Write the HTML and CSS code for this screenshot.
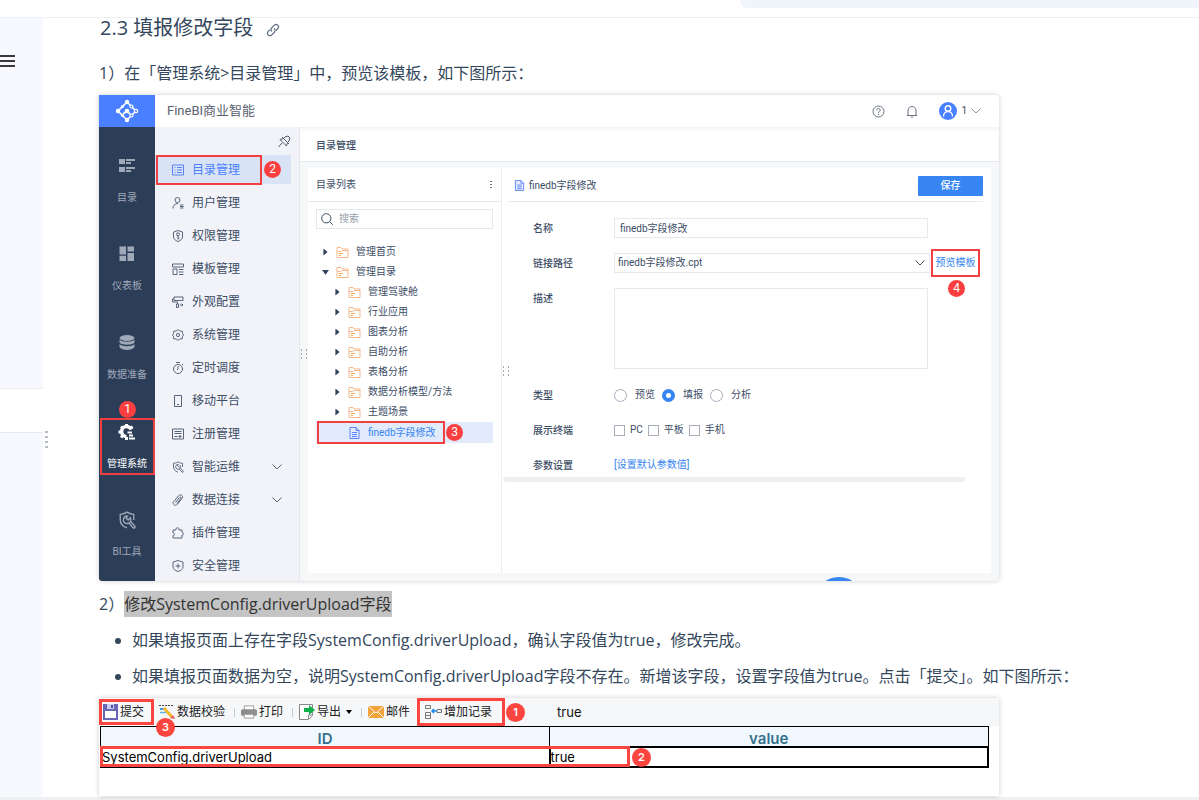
FILE: index.html
```html
<!DOCTYPE html>
<html lang="zh-CN">
<head>
<meta charset="utf-8">
<title>填报修改字段</title>
<link rel="stylesheet" href="styles.css">
</head>
<body>
<svg class="defs" aria-hidden="true">
  <symbol id="folder" viewBox="0 0 12 12"><g fill="none" stroke="#f8b88b"><path d="M.5 11.500V1.500h4l1.200 1.500h5.800v8.500zM.5 5.500h4l1-1h6"/><path stroke="#f6a94b" d="M2.500 7.500h4M2.500 9.500h2"/></g></symbol>
  <symbol id="doc" viewBox="0 0 12 12"><path fill="#e4ebff" stroke="#5b83f5" d="M1.500.5h6l3 3v8h-9zM7.500.5v3h3M3.500 5.500h5M3.500 7.500h5M3.500 9.500h5"/></symbol>
  <symbol id="down" viewBox="0 0 10 6"><path fill="none" stroke="currentColor" d="M.5.5 5 5 9.500.5"/></symbol>
  <symbol id="tool" viewBox="0 0 16 16"><g fill="none" stroke="currentColor" stroke-width="1.200"><path d="M14 8V3C11 3 9.500 2 8 1 6.500 2 5 3 2 3v5c0 3 2 5.500 6 7"/><path d="m9.500 10.500 4 4.500c1 .5 2-.5 1.500-1.500l-4-4.500"/><path d="M8.500 4.500a3.300 3.300 0 1 0 2.700 4.500c.5-1.300.3-2-.2-3L9 8 7.200 6.300z"/></g></symbol>
</svg>
<header class="topbar"><div class="topsearch"></div></header>
<div class="page">
  <aside class="side">
    <button class="burger" aria-label="菜单"><i></i><i></i><i></i></button>
    <div class="tab"></div>
  </aside>
  <main class="doc">
    <div class="grip"><i></i><i></i><i></i><i></i></div>
    <h2>2.3 填报修改字段
      <svg width="14" height="14" viewBox="0 0 14 14" fill="none" stroke="#5f6f83" stroke-width="1.200"><path d="M6 8.500C4.500 7.500 4.800 5.500 6 4.500l2.300-2.400c2.500-2 5.500 1 3.700 3.400L10 7.500M8 5.500c1.500 1 1.300 3 0 4.200L5.700 12C3.200 14 .2 11 2 8.600l2-2"/></svg>
    </h2>
    <p class="step">1）在「管理系统&gt;目录管理」中，预览该模板，如下图所示：</p>

    <section class="app">
      <div class="logo"><svg width="24" height="24" viewBox="0 0 24 24"><g fill="none" stroke="#fff" stroke-width="1.600"><path d="M12 3 3 12l9 9M12 3l4 4M8 15l4-3 4 4M12 21l4-4M17 8l4 4-4 4"/></g><g fill="#fff"><circle cx="12" cy="3" r="2.200"/><circle cx="3" cy="12" r="2.200"/><circle cx="12" cy="21" r="2.200"/><circle cx="12" cy="12" r="2.300"/><circle cx="7.500" cy="7.500" r="1.500"/><circle cx="7.500" cy="16.500" r="1.500"/></g><g fill="#4a80ff" stroke="#fff" stroke-width="1.200"><circle cx="16.500" cy="7.500" r="1.500"/><circle cx="21" cy="12" r="1.700"/><circle cx="16.500" cy="16.500" r="1.500"/></g></svg></div>
      <div class="apphead">
        <span class="brand">FineBI商业智能</span>
        <svg width="13" height="13" viewBox="0 0 13 13" fill="none" stroke="#68717f"><circle cx="6.500" cy="6.500" r="5.500"/><path d="M4.700 5.200c0-2.400 3.600-2.200 3.600 0 0 1.200-1.800 1.200-1.800 2.500M6.500 8.800v1.200"/></svg>
        <svg width="12" height="13" viewBox="0 0 12 13" fill="none" stroke="#68717f"><path d="M1 10.500h10M2 10.500V6c0-6 8-6 8 0v4.500M5 12.200h2"/></svg>
        <div class="user">
          <svg width="18" height="18" viewBox="0 0 18 18"><circle cx="9" cy="9" r="9" fill="#4a80ff"/><g fill="none" stroke="#fff" stroke-width="1.400"><circle cx="9" cy="6.500" r="2.800"/><path d="M4.500 14.500c0-6.500 9-6.500 9 0"/></g></svg>
          <span>1</span>
          <svg width="10" height="6" color="#8f96a1"><use href="#down"/></svg>
        </div>
      </div>

      <nav class="rail">
        <a href="#"><svg width="18" height="18" viewBox="0 0 18 18" fill="currentColor"><path d="M1 2h6v5H1zM1 10h6v5H1zM8 2h9v2H8zM8 5h5v2H8zM8 10h9v2H8zM8 13h5v2H8z"/></svg>目录</a>
        <a href="#"><svg width="18" height="18" viewBox="0 0 18 18" fill="currentColor"><path d="M1.500 1.500H8v8H1.500zM9.500 1.500H16v5H9.500zM1.500 10.800H8V16H1.500zM9.500 8H16v8H9.500z"/></svg>仪表板</a>
        <a href="#"><svg width="18" height="18" viewBox="0 0 18 18" fill="currentColor"><ellipse cx="9" cy="4" rx="7.500" ry="3"/><path d="M1.500 5.500c2 3 13 3 15 0v3c-2 3-13 3-15 0zM1.500 10c2 3 13 3 15 0v3c-2 4-13 4-15 0z"/></svg>数据准备</a>
        <a href="#" class="on"><svg width="18" height="18" viewBox="0 0 18 18"><path fill="none" stroke="#fff" stroke-width="3.500" d="M13.200 6.500A5 5 0 1 0 8.500 13.500"/><path stroke="#fff" stroke-width="3" d="M8.500 1v3M.5 9h3M3 3.500l2 2M14.500 3.500l-2 2M3 14.500l2-2M8.500 17v-3"/><path stroke="#fff" stroke-width="2" d="M9.500 9.500H14M11 12.500h4M11 15.500h6"/></svg>管理系统<b class="frame"></b><b class="badge b1">1</b></a>
        <a href="#"><svg width="18" height="18"><use href="#tool"/></svg>BI工具</a>
      </nav>

      <nav class="menu">
        <button class="pin" aria-label="固定"><svg width="13" height="13" viewBox="0 0 13 13" fill="none" stroke="#505b6c"><path d="M2 4.500 8.500 11l.8-3M2 4.500l3-.8M7 2l3-1 2 2-1 3M4 8l-3.500 4M4 2l7 7M6 3l1-1M10 7l1-1"/></svg></button>
        <a href="#" class="on"><svg viewBox="0 0 12 12"><path d="M.5 1h11v10H.5zM2.500 3.500h1M5 3.500h5M2.500 6h1M5 6h5M2.500 8.500h1M5 8.500h5"/></svg>目录管理<b class="frame"></b><b class="badge b2">2</b></a>
        <a href="#"><svg viewBox="0 0 12 12"><circle cx="5.500" cy="3" r="2.500"/><path d="M1 11.500c0-3 2-5 5-5M8 8h3.500M8 9.500h3.500M8 11h3.500"/></svg>用户管理</a>
        <a href="#"><svg viewBox="0 0 12 12"><path d="M1.500 2 6 .5 10.500 2v5c0 2-2 3.500-4.500 4.500C3.500 10.500 1.500 9 1.500 7z"/><circle cx="6" cy="4.300" r="1.500"/><path d="M6 6v3.500M6 8h1.500"/></svg>权限管理</a>
        <a href="#"><svg viewBox="0 0 12 12"><path d="M.5 1h11v3H.5zM1 6h4v5.500H1zM7 6.500h4.500M7 9h4.500M7 11.500h4.500"/></svg>模板管理</a>
        <a href="#"><svg viewBox="0 0 12 12"><path d="M2 1h9v3.500H2zM2 3H.5v3h5v2M4.500 8h2v3.500h-2zM9 7.500v3M10.500 8v2"/></svg>外观配置</a>
        <a href="#"><svg viewBox="0 0 12 12"><path d="M6 .5 7.500 2l2.800.2.200 2.300 1 1.500-1 1.500-.2 2.300-2.800.2L6 11.500 4.500 10l-2.800-.2-.2-2.300L.5 6l1-1.500.2-2.300L4.500 2z"/><circle cx="6" cy="6" r="1.600"/></svg>系统管理</a>
        <a href="#"><svg viewBox="0 0 12 12"><circle cx="6" cy="7" r="4.500"/><path d="M4 .5h4M6 4v3l-1 1M10 2l1 1"/></svg>定时调度</a>
        <a href="#"><svg viewBox="0 0 12 12"><path d="M2.500.5h7v11h-7zM5 9.500h2"/></svg>移动平台</a>
        <a href="#"><svg viewBox="0 0 12 12"><path d="M.5 1h11v10H.5zM2.500 3.500h7M2.500 5.500h7M2.500 8.500h3M8 7v3M6.500 8.500h3"/></svg>注册管理</a>
        <a href="#"><svg viewBox="0 0 16 16"><use href="#tool"/></svg>智能运维<svg class="more" viewBox="0 0 10 6"><use href="#down"/></svg></a>
        <a href="#"><svg viewBox="0 0 12 12"><path d="M2 7.500 6.500 1.800c2-2 5-.3 3.700 2.200L5.700 10c-2.500 3-6 0-4-2.500M3.500 8.500 7.500 3.500c1-1 2 0 1.200 1L5 9.500"/></svg>数据连接<svg class="more" viewBox="0 0 10 6"><use href="#down"/></svg></a>
        <a href="#"><svg viewBox="0 0 12 12"><path d="M1 3h3c-1-3 4-3 3 0h3v2.500c2-.5 2 3 0 2.500v3H1V8.500c2 .5 2-3 0-2.500z"/></svg>插件管理</a>
        <a href="#"><svg viewBox="0 0 12 12"><path d="M1 2 6 .5 11 2v5c0 2-2 3.500-5 4.500C3 10.500 1 9 1 7zM6 3.500v5M3.500 6h5"/></svg>安全管理</a>
      </nav>

      <div class="work">
        <h3>目录管理</h3>
        <div class="panes">
          <div class="dots d1"></div>
          <section class="tree">
            <header>目录列表<span class="kebab"></span></header>
            <label class="find"><svg width="12" height="12" viewBox="0 0 12 12" fill="none" stroke="#3d4d66"><circle cx="5.300" cy="5.300" r="4.600"/><path d="m8.700 8.700 3 3"/></svg><input type="text" placeholder="搜索" aria-label="搜索"></label>
            <ul>
              <li><svg><use href="#folder"/></svg>管理首页</li>
              <li class="open"><svg><use href="#folder"/></svg>管理目录</li>
              <li class="sub"><svg><use href="#folder"/></svg>管理驾驶舱</li>
              <li class="sub"><svg><use href="#folder"/></svg>行业应用</li>
              <li class="sub"><svg><use href="#folder"/></svg>图表分析</li>
              <li class="sub"><svg><use href="#folder"/></svg>自助分析</li>
              <li class="sub"><svg><use href="#folder"/></svg>表格分析</li>
              <li class="sub"><svg><use href="#folder"/></svg>数据分析模型/方法</li>
              <li class="sub"><svg><use href="#folder"/></svg>主题场景</li>
              <li class="sub leaf"><svg><use href="#doc"/></svg>finedb字段修改<b class="frame"></b><b class="badge b3">3</b></li>
            </ul>
          </section>
          <form class="form">
            <div class="dots d2"></div>
            <header><svg width="11" height="11"><use href="#doc"/></svg>finedb字段修改<button type="button" class="save">保存</button></header>
            <div class="row"><label for="nm">名称</label><input id="nm" type="text" value="finedb字段修改"></div>
            <div class="row"><label for="pt">链接路径</label><div class="pick"><select id="pt"><option>finedb字段修改.cpt</option></select><svg width="10" height="6"><use href="#down"/></svg></div><a href="#" class="preview">预览模板<b class="badge b4">4</b></a></div>
            <div class="row tall"><label for="ds">描述</label><textarea id="ds"></textarea></div>
            <div class="row"><span class="lab">类型</span><div class="opts radios"><label><input type="radio" name="t">预览</label><label><input type="radio" name="t" checked>填报</label><label><input type="radio" name="t">分析</label></div></div>
            <div class="row"><span class="lab">展示终端</span><div class="opts checks"><label><input type="checkbox">PC</label><label><input type="checkbox">平板</label><label><input type="checkbox">手机</label></div></div>
            <div class="row last"><span class="lab">参数设置</span><a href="#">[设置默认参数值]</a></div>
            <div class="scroll"></div>
          </form>
        </div>
        <div class="bubble"></div>
      </div>
    </section>

    <p class="step two">2）<mark>修改SystemConfig.driverUpload字段</mark></p>
    <ul class="notes">
      <li>如果填报页面上存在字段SystemConfig.driverUpload，确认字段值为true，修改完成。</li>
      <li>如果填报页面数据为空，说明SystemConfig.driverUpload字段不存在。新增该字段，设置字段值为true。点击「提交」。如下图所示：</li>
    </ul>

    <section class="report">
      <div class="tools">
        <button class="submit"><svg width="15" height="16" viewBox="0 0 15 16"><path fill="#6a67b5" d="M0 0h15v16H0z"/><path fill="#fff" d="M2 7h11v7H2z"/><path fill="#c9cdf0" d="M4 0h7v5H4z"/><path fill="#4c4a99" d="M8 1h2v3H8z"/></svg>提交<b class="frame"></b><b class="badge r3">3</b></button>
        <button class="check"><svg width="16" height="16" viewBox="0 0 16 16"><path stroke="#444" stroke-dasharray="2 1" d="M0 1.500h15"/><path stroke="#3b9be8" stroke-width="2" d="M1 5h5"/><path stroke="#5fb0ef" stroke-width="1.500" d="M1 8.500h6"/><path stroke="#f6b72b" stroke-width="3" d="m5 4 7.500 8.500"/><path fill="#e8574d" d="m11 14 3-3 2 4z"/></svg>数据校验</button>
        <i class="sep"></i>
        <button class="print"><svg width="16" height="16" viewBox="0 0 17 16"><path fill="#fff" stroke="#999" d="M3.500 1.500h10V7h-10z"/><rect y="5" width="17" height="7" rx="2" fill="#8d8d8d"/><path fill="#fff" stroke="#999" d="M3.500 10.500h10v4h-10z"/></svg>打印</button>
        <i class="sep"></i>
        <button class="export"><svg width="16" height="16" viewBox="0 0 16 16"><path fill="#fff" stroke="#888" d="M.5.500h13v11l-4 4h-9zM9.500 15v-4h4"/><path fill="#12b04b" d="M5 4h5V1l6 5-6 5V8H5z"/></svg>导出<svg class="caret" width="6" height="4" viewBox="0 0 6 4"><path d="M0 0h6L3 4z"/></svg></button>
        <i class="sep"></i>
        <button class="mail"><svg width="16" height="12" viewBox="0 0 16 12"><path fill="#f2a33c" d="M0 0h16v12H0z"/><path fill="none" stroke="#fff" d="m0 0 8 7 8-7M0 12l6-6M16 12l-6-6"/></svg>邮件</button>
        <button class="add"><svg width="17" height="16" viewBox="0 0 17 16" fill="none" stroke="#777"><path d="M.5 1.500h5v3h-5zM.5 8.500h5v3h-5zM.5 11.500h5v3h-5zM12 5.500h4.500v3H12z"/><path stroke="#1a86e8" stroke-width="1.500" d="M7 7h5M9 5 7 7l2 2"/></svg>增加记录<b class="frame"></b><b class="badge r1">1</b></button>
        <span class="val">true</span>
      </div>
      <div class="sheet">
        <table>
          <thead><tr><th>ID</th><th>value</th></tr></thead>
          <tbody><tr><td>SystemConfig.driverUpload</td><td class="cell">true</td></tr></tbody>
        </table>
        <b class="frame"></b><b class="badge r2">2</b>
      </div>
    </section>
  </main>
</div>
<footer class="foot"></footer>
</body>
</html>
```
FILE: styles.css
```css
* { box-sizing: border-box; }
body { margin: 0; background: #fff; color: #34475c; font: 16px/24px "Open Sans", "Noto Sans CJK SC", sans-serif; }
button, input, select, textarea { font: inherit; color: inherit; }
button { border: 0; background: none; padding: 0; }
a { color: inherit; text-decoration: none; }
ul { margin: 0; padding: 0; list-style: none; }
svg { flex: none; }
.defs { position: absolute; width: 0; height: 0; }

.topbar { height: 18px; border-bottom: 1px solid #eceff3; display: flex; justify-content: flex-end; }
.topsearch { width: 459px; height: 8px; background: #f0f4fb; border-bottom-left-radius: 12px; }
.page { display: flex; }
.side { width: 43px; background: #f7f9fe; padding-top: 37px; flex: none; }
.burger { display: flex; flex-direction: column; gap: 3px; width: 15px; }
.burger i { height: 2px; background: #3a3a3a; }
.tab { margin-top: 321px; height: 45px; background: #fff; border: 1px solid #e9ebef; border-width: 1px 0; }
.doc { flex: 1; min-width: 0; padding: 0 56px 1px; position: relative; }
.grip { position: absolute; left: 2px; top: 413px; display: grid; gap: 3px; }
.grip i { width: 3px; height: 2px; background: #b7bcc4; }

h2 { margin: 0; padding-left: 1px; font-size: 20px; font-weight: 400; line-height: 20px; display: flex; align-items: center; gap: 13px; }
h2 svg { margin-top: 4px; }
.step { margin: 0; padding: 23px 0 10px; }
.step.two { padding: 11px 0 0; }
mark { background: #c4c4c4; color: #333; padding: 2px 0; }
.notes { padding: 6px 0 4px; }
.notes li { position: relative; padding: 6px 0 6px 33px; white-space: nowrap; }
.notes li::before { content: ""; position: absolute; left: 16px; top: 16px; width: 6px; height: 6px; border-radius: 50%; background: #34475c; }

.badge { position: absolute; z-index: 2; width: 17px; height: 17px; border-radius: 50%; background: #fb3f40; color: #fff; font: 12px/17px Roboto, sans-serif; text-align: center; }
.frame { position: absolute; z-index: 1; border: 2px solid #f0403f; }

.app { max-width: 900px; display: grid; grid-template-columns: 56px 145px minmax(0, 1fr); grid-template-rows: 32px auto; border-radius: 0 3px 4px 3px; overflow: hidden; box-shadow: 0 0 5px rgba(0, 0, 0, .2); font: 10px/16px Roboto, "Noto Sans CJK SC", sans-serif; color: #3d4d66; }
.logo { background: #4a80ff; display: grid; place-items: center; }
.apphead { grid-column: 2 / 4; display: flex; align-items: center; padding: 0 18px 0 12px; gap: 21px; }
.brand { font-size: 13px; margin-right: auto; color: #5a6270; }
.user { display: flex; align-items: center; gap: 4px; }

.rail { background: #2c3d58; display: flex; flex-direction: column; padding: 10px 0 1px; color: #a0a9b8; }
.rail a { flex: 1; display: flex; flex-direction: column; align-items: center; justify-content: center; gap: 15px; position: relative; }
.rail .on { color: #fff; }
.rail .frame { left: 1px; right: 0; top: 15px; height: 57px; }
.b1 { top: -2px; left: 20px; }

.menu { background: #f2f3f8; border-right: 1px solid #e4e7ec; display: flex; flex-direction: column; gap: 4px; font-size: 12px; padding-bottom: 1px; }
.pin { height: 24px; padding: 5px 8px 0 0; display: flex; justify-content: flex-end; align-items: center; }
.menu a { height: 29px; margin-right: 8px; padding: 0 9px 0 17px; display: flex; align-items: center; gap: 8px; position: relative; }
.menu a > svg { width: 12px; height: 12px; fill: none; stroke: #58647a; stroke-width: 1; color: #58647a; }
.menu a > .more { margin-left: auto; width: 10px; height: 6px; }
.menu .on { background: #d9e3f6; color: #4a80ff; }
.menu .on > svg { stroke: #5b83f5; }
.menu .frame { left: 1px; top: 0; width: 106px; height: 30px; }
.b2 { left: 109px; top: 6px; }

.work { background: #f6f7f9; position: relative; }
.work h3 { margin: 0; height: 35px; padding: 0 16px; background: #fff; border-bottom: 1px solid #e6e8eb; box-shadow: inset 0 3px 4px -2px #e9ecef; font-size: 10px; line-height: 38px; font-weight: 500; }
.panes { display: flex; margin: 6px 8px 8px; height: 405px; background: #fff; position: relative; }
.tree { width: 194px; border-right: 1px solid #eceef1; }
.tree header { height: 34px; padding: 0 9px 0 8px; display: flex; align-items: center; justify-content: space-between; border-bottom: 1px solid #e6e8eb; }
.kebab { width: 2px; height: 7px; background: repeating-linear-gradient(#687180 0 1px, transparent 1px 3px); }
.find { margin: 7px 8px 13px; height: 20px; border: 1px solid #e6e8eb; display: flex; align-items: center; gap: 6px; padding: 0 4px; }
.find input { border: 0; outline: 0; padding: 0; width: 100%; min-width: 0; }
.find input::placeholder { color: #979eaa; opacity: 1; }
.tree li { height: 20px; margin: 0 8px; padding-left: 6px; display: flex; align-items: center; gap: 7px; position: relative; }
.tree li > svg { width: 13px; height: 12px; }
.tree li::before { content: ""; width: 7px; height: 7px; flex: none; background: #34435c; clip-path: polygon(20% 0, 80% 50%, 20% 100%); }
.tree li.open::before { clip-path: polygon(0 20%, 100% 20%, 50% 90%); }
.tree li.sub { padding-left: 18px; }
.tree li.leaf { background: #e1ebfb; color: #3685f2; height: 21px; }
.tree li.leaf::before { visibility: hidden; }
.tree .frame { left: 1px; top: -1px; width: 128px; height: 23px; }
.b3 { left: 130px; top: 2px; }
.dots { position: absolute; width: 9px; height: 11px; background: radial-gradient(circle, #a2a8b2 1px, transparent 1px) 0 0 / 5px 4px; }
.d1 { left: -9px; top: 180px; }
.d2 { left: -1px; top: 197px; }

.form { flex: 1; min-width: 0; padding: 0 8px 0 7px; position: relative; }
.form header { height: 34px; display: flex; align-items: center; gap: 4px; padding: 2px 0 0 5px; border-bottom: 1px solid #e6e8eb; margin-bottom: 16px; }
.save { margin-left: auto; width: 65px; height: 20px; background: #3685f2; color: #fff; border-radius: 1px; font-weight: 500; }
.row { display: grid; grid-template-columns: 81px minmax(0, 1fr) 49px; padding: 0 3px 0 24px; align-items: center; min-height: 20px; margin-bottom: 15px; }
.row > label, .lab { font-weight: 500; padding-top: 1px; }
.row > input, .row > textarea, .pick { margin-right: 3px; border: 1px solid #e6e8eb; height: 20px; padding: 0 5px; outline: 0; border-radius: 0; min-width: 0; }
.row > input { padding-bottom: 2px; }
.pick { display: flex; align-items: center; margin-right: 1px; padding: 0 4px 0 3px; }
.pick select { appearance: none; border: 0; background: none; flex: 1; min-width: 0; padding: 0; outline: 0; }
.row .preview { position: relative; height: 28px; margin: -4px 0; border: 2px solid #f0403f; display: grid; place-items: center; white-space: nowrap; }
.b4 { left: 15px; top: 29px; }
.row a { color: #3685f2; }
.row.tall { align-items: start; margin-bottom: 16px; }
.row.tall > label { padding-top: 3px; }
.row > textarea { height: 81px; resize: none; display: block; }
.opts { display: flex; align-items: center; gap: 7px; }
.opts label { display: flex; align-items: center; gap: 8px; }
.opts input { appearance: none; margin: 0; border: 1px solid #a8afba; background: #fff; }
.radios input { width: 13px; height: 13px; border-radius: 50%; }
.radios input:checked { border: 4px solid #3685f2; }
.checks { gap: 5px; }
.checks label { gap: 5px; }
.checks input { width: 11px; height: 11px; }
.row.last { margin-bottom: 2px; }
.scroll { margin: 0 18px 0 -6px; height: 5px; border-radius: 3px; background: #eeeff1; }
.bubble { position: absolute; left: 515px; bottom: -44px; width: 48px; height: 48px; border-radius: 50%; background: #3685f2; }

.report { max-width: 900px; height: 98px; background: #fff; box-shadow: 0 0 5px rgba(0, 0, 0, .2); color: #222; font: 13px/16px Inter, "Noto Sans CJK SC", sans-serif; }
.tools { height: 28px; background: #f6f7f9; display: flex; align-items: center; padding-left: 4px; }
.tools button { display: flex; align-items: center; gap: 2px; font-size: 12px; position: relative; white-space: nowrap; }
.tools .frame { border-width: 3px; border-color: #fd453f; }
.submit .frame { left: -4px; top: -5px; width: 55px; height: 26px; }
.check { margin-left: 15px; }
.sep { width: 1px; height: 9px; margin: 0 6px 0 9px; background: #c8ccd0; }
.caret { margin-left: 3px; }
.add { margin-left: 15px; }
.add .frame { left: -8px; top: -6px; width: 88px; height: 28px; }
.report .badge { width: 19px; height: 19px; background: #fd453f; font: 600 11px/19px Inter, sans-serif; }
.r3 { left: 53px; top: 14px; }
.r1 { left: 81px; top: -1px; }
.val { margin-left: 65px; color: #111; }
.sheet { position: relative; margin: 0 10px 0 1px; }
table { width: 100%; border-collapse: collapse; table-layout: fixed; color: #000; }
th, td { height: 20px; padding: 0; border: 1px solid #000; line-height: 16px; }
th { background: #f0f7fe; color: #34718c; font-size: 15px; font-weight: 600; padding-top: 4px; line-height: 15px; }
th:first-child { width: 449px; }
td { text-align: left; padding-left: 1px; }
td.cell { border: 2px solid #000; padding-left: 0; }
.sheet .frame { left: 0; top: 20px; width: 530px; height: 21px; border: 3px solid #fd453f; }
.r2 { left: 532px; top: 22px; }
.foot { height: 3px; background: #eff0f1; }
```
